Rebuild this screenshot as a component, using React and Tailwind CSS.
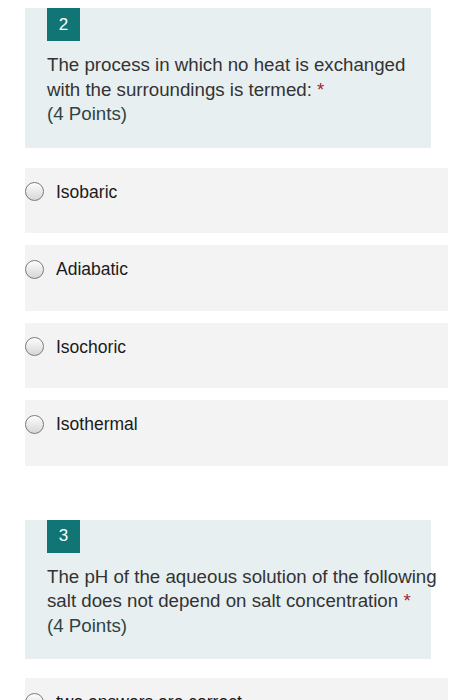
const questions = [
  {
    num: 2,
    lines: ['The process in which no heat is exchanged', 'with the surroundings is termed:'],
    options: ['Isobaric', 'Adiabatic', 'Isochoric', 'Isothermal'],
  },
  {
    num: 3,
    lines: ['The pH of the aqueous solution of the following', 'salt does not depend on salt concentration'],
    options: ['two answers are correct'],
  },
]

function Radio() {
  return (
    <span className="w-[19px] h-[19px] shrink-0 rounded-full border border-[#7a7a7a] bg-gradient-to-b from-[#fdfdfd] to-[#d6d6d6] shadow-[inset_0_1px_1px_rgba(255,255,255,0.9)]" />
  )
}

function Question({ num, lines, options, last }) {
  return (
    <div className={last ? 'pt-[54px]' : 'pt-2'}>
      {/* Question header */}
      <div className="ml-[25px] w-[406px] bg-[#e8eff1] pl-[22px] pb-[21px]">
        <div className="w-[33px] h-[33px] bg-[#117576] text-white text-[17px] flex items-center justify-center">
          {num}
        </div>
        <div className="mt-[12px] text-[18.7px] leading-[24.5px] text-[#333] whitespace-nowrap">
          <div>{lines[0]}</div>
          <div>
            {lines[1]} <span className="text-[#a4262c]">*</span>
          </div>
          <div className="text-[#2c4545]">(4 Points)</div>
        </div>
      </div>

      {/* Options */}
      <div className={`flex flex-col gap-[12px] ${last ? 'mt-[19px]' : 'mt-[20px]'}`}>
        {options.map((o) => (
          <div key={o} className="ml-[25px] w-[423px] h-[65.5px] bg-[#f3f3f3] flex items-start">
            <div className="flex items-center gap-[12px] mt-[11px]">
              <Radio />
              <span className="text-[17.5px] text-[#1a1a1a]">{o}</span>
            </div>
          </div>
        ))}
      </div>
    </div>
  )
}

export default function App() {
  return (
    <div className="min-h-screen h-[700px] overflow-hidden bg-white font-['Liberation_Sans',Arial,sans-serif]">
      {questions.map((q, i) => (
        <Question key={q.num} {...q} last={i === 1} />
      ))}
    </div>
  )
}
